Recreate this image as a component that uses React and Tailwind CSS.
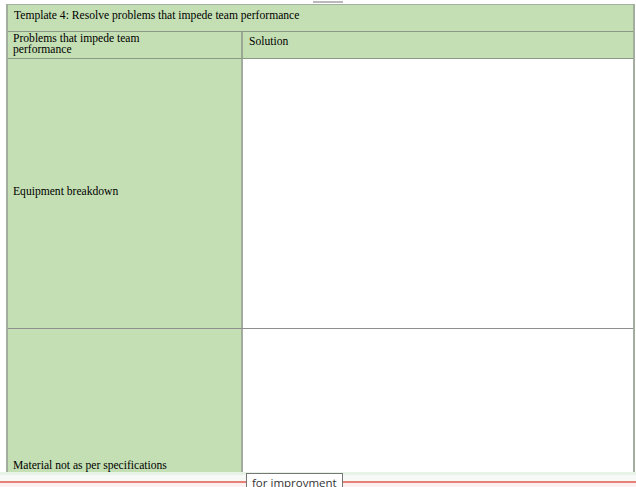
export default function App() {
  return (
    <div className="relative h-[487px] w-[636px] overflow-hidden bg-white font-['Liberation_Serif',serif] text-[11.6px] text-black">
      {/* tiny page header */}
      <div className="flex h-[4px] justify-center">
        <div className="ml-[20px] mt-[1px] h-[2px] w-[30px] bg-[#b9b9b9]" />
      </div>

      {/* table */}
      <div className="ml-[6px] h-[468px] w-[629px] overflow-hidden border-x-2 border-t border-[#a4ae9f]">
        <div className="flex h-[26px] items-center bg-[#c4dfb3] px-[6px] pb-[5px] leading-none">
          Template 4: Resolve problems that impede team performance
        </div>
        <div className="grid h-[28px] grid-cols-[235px_1fr] border-y border-[#8c9a85] bg-[#c4dfb3]">
          <div className="flex items-center border-r-2 border-[#9aa893] px-[5px] pb-[3px] leading-[11px]">
            Problems that impede team
            <br />
            performance
          </div>
          <div className="flex items-center px-[6px] pb-[6px]">Solution</div>
        </div>
        <div className="grid h-[270px] grid-cols-[235px_1fr] border-b border-[#8f8f8f]">
          <div className="flex items-center border-r-2 border-[#a3ab9f] bg-[#c4dfb3] px-[5px] pb-[4px]">
            Equipment breakdown
          </div>
          <div className="bg-white" />
        </div>
        <div className="grid h-[272px] grid-cols-[235px_1fr]">
          <div className="flex items-center border-r-2 border-[#a3ab9f] bg-[#c4dfb3] px-[5px] pt-[2px]">
            Material not as per specifications
          </div>
          <div className="bg-white" />
        </div>
      </div>

      {/* bottom strip */}
      <div className="h-[3px] bg-[#e8f3e8]" />
      <div className="h-[6px] bg-[#f7f9f7]" />
      <div className="h-[2px] bg-[#e8807a]" />
      <div className="h-[10px] bg-[#fdf0ef]" />

      {/* tooltip */}
      <div className="absolute left-[246px] top-[473px] border border-[#767676] bg-white px-[5px] pt-[1px] font-['Open_Sans',sans-serif] text-[11.5px] leading-[16px] text-[#333]">
        for improvment
      </div>
    </div>
  );
}
